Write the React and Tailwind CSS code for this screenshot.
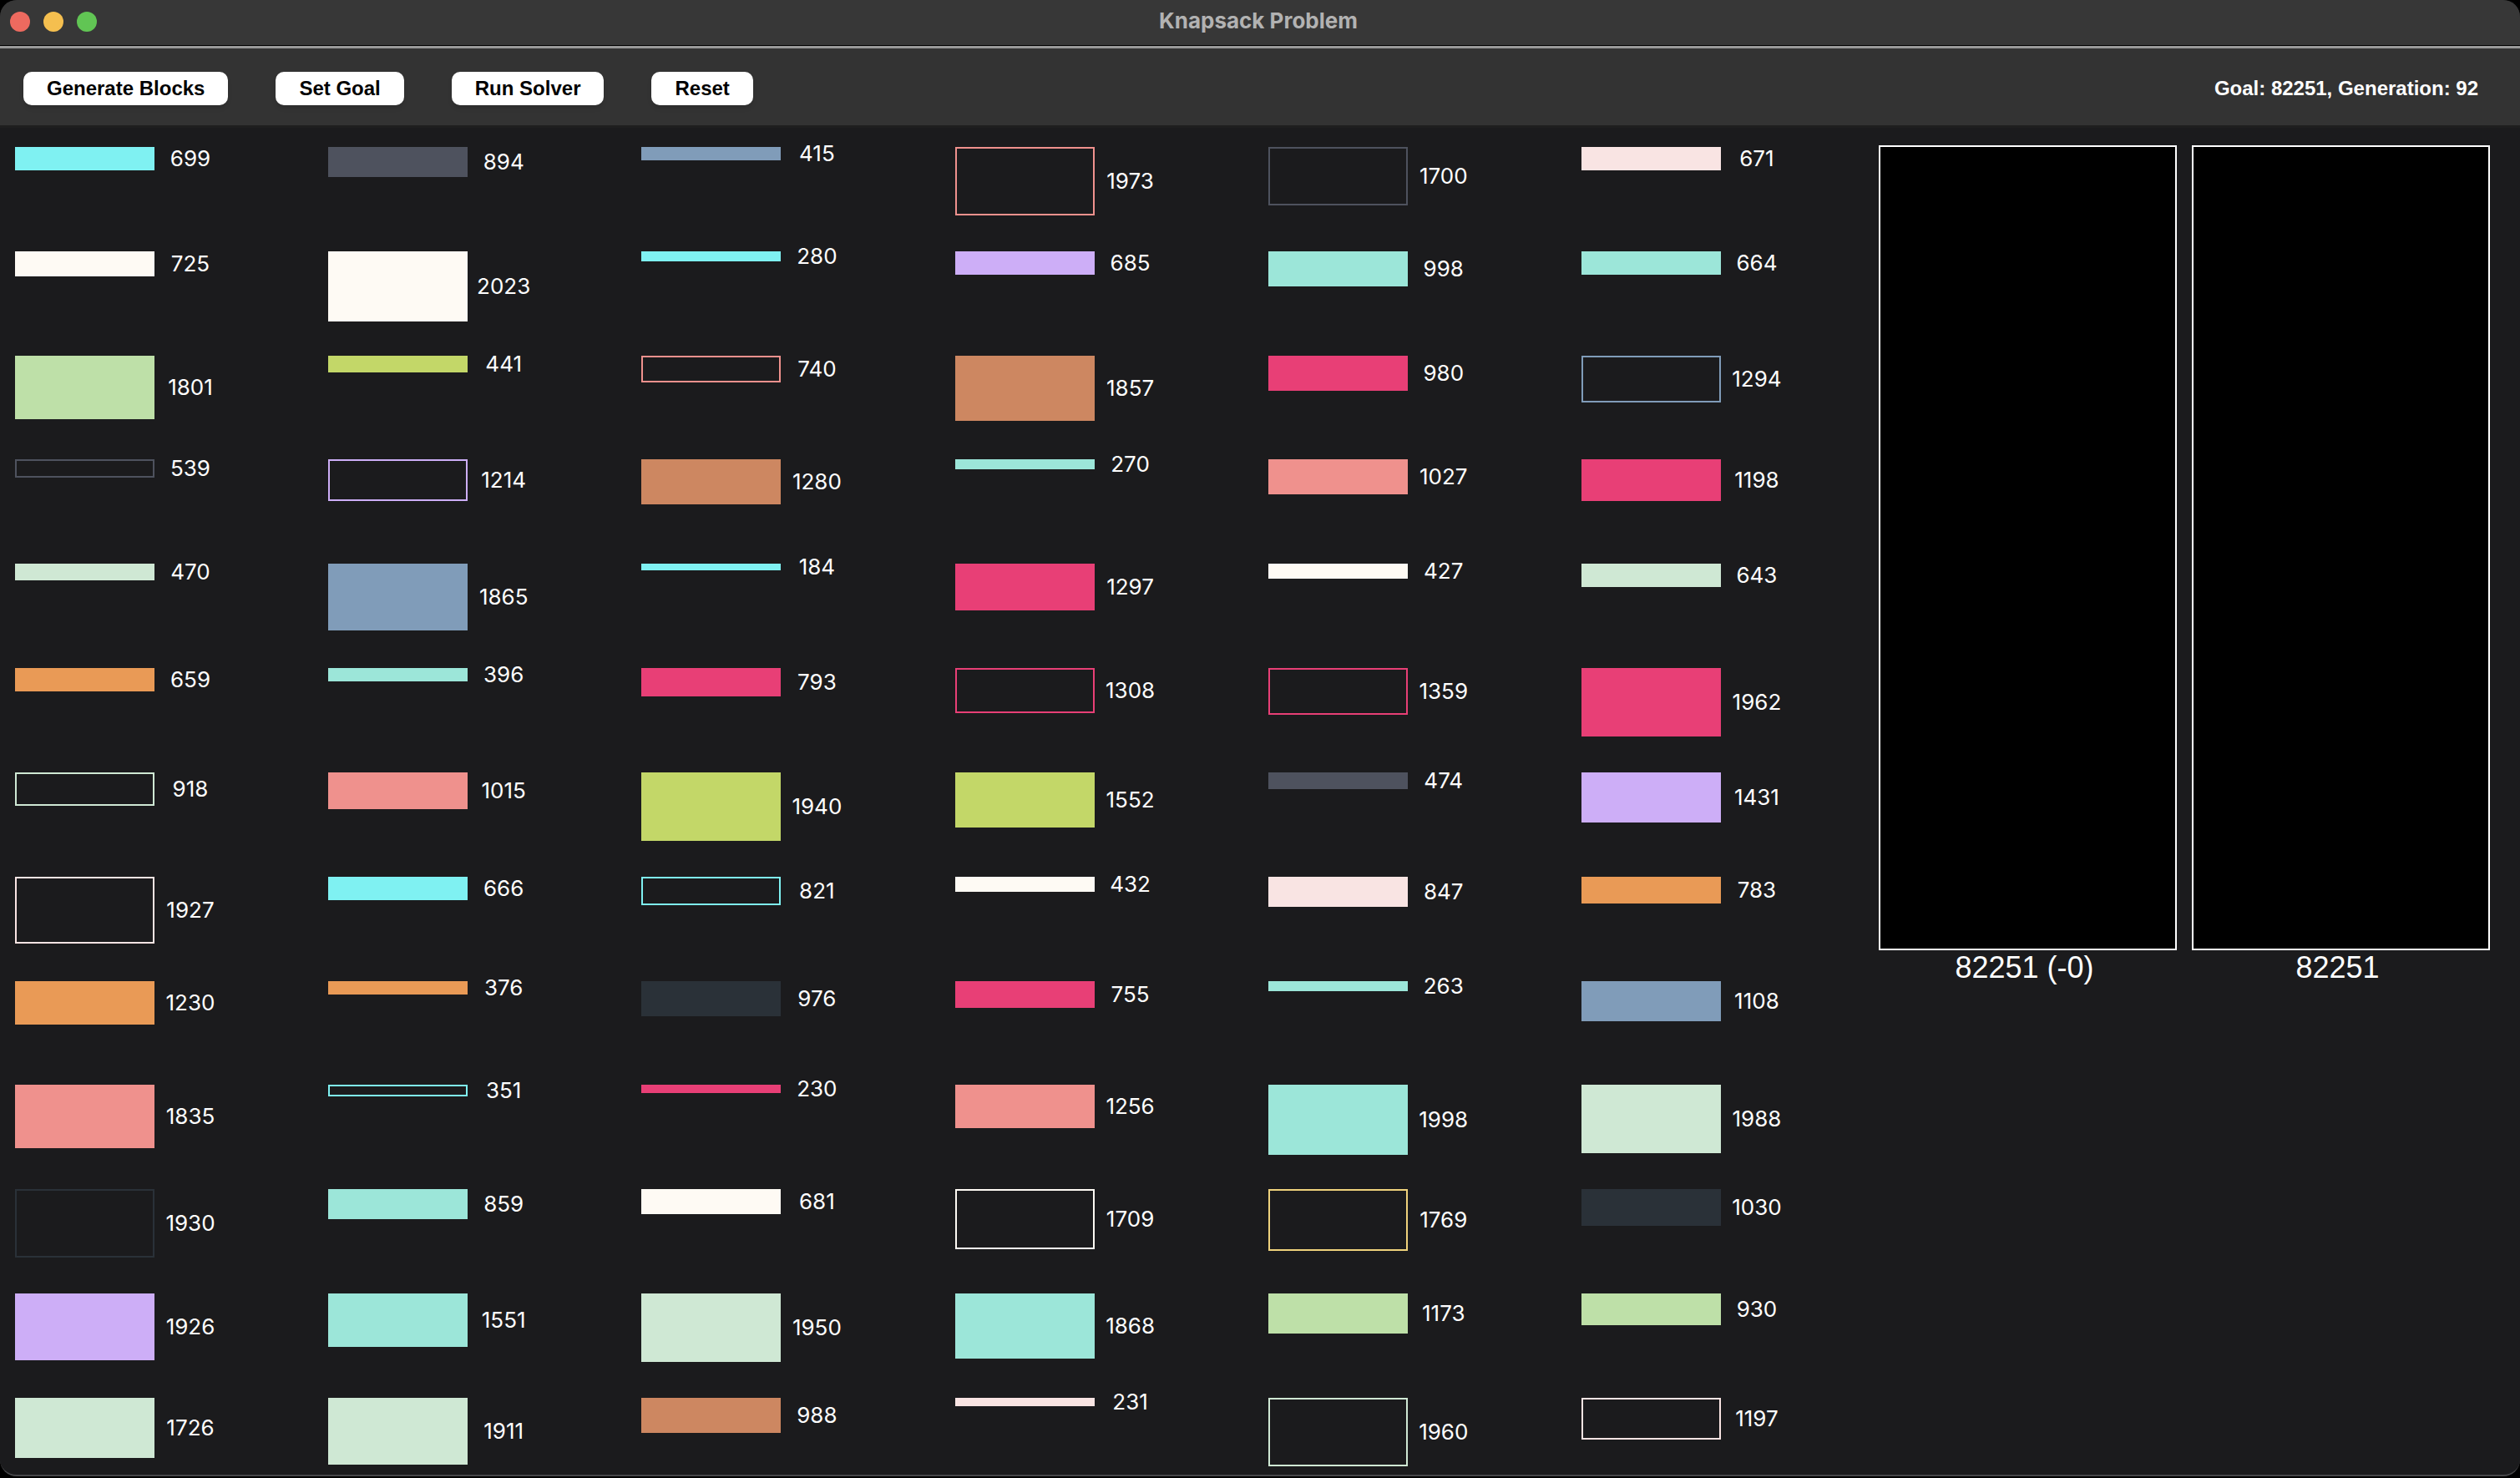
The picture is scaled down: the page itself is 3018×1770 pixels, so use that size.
const FILL = {
  aqua: "bg-[#7ff1f2] border-[#7ff1f2]",
  slate: "bg-[#4e525e] border-[#4e525e]",
  steel: "bg-[#809cb9] border-[#809cb9]",
  coral: "bg-[#ef918d] border-[#ef918d]",
  blush: "bg-[#f9e4e3] border-[#f9e4e3]",
  ivory: "bg-[#fefaf4] border-[#fefaf4]",
  violet: "bg-[#cdaef7] border-[#cdaef7]",
  mint: "bg-[#9ce6d9] border-[#9ce6d9]",
  leaf: "bg-[#bee0a8] border-[#bee0a8]",
  lime: "bg-[#c3d768] border-[#c3d768]",
  copper: "bg-[#cd8761] border-[#cd8761]",
  pink: "bg-[#e83f76] border-[#e83f76]",
  pale: "bg-[#cfe8d4] border-[#cfe8d4]",
  orange: "bg-[#e99a56] border-[#e99a56]",
  ink: "bg-[#2a3138] border-[#2a3138]",
};

const OUTLINE = {
  aqua: "border-[#7ff1f2]",
  slate: "border-[#4e525e]",
  steel: "border-[#809cb9]",
  coral: "border-[#ef918d]",
  blush: "border-[#f9e4e3]",
  ivory: "border-[#fefaf4]",
  violet: "border-[#cdaef7]",
  pink: "border-[#e83f76]",
  pale: "border-[#cfe8d4]",
  gold: "border-[#efd27c]",
  ink: "border-[#2a3138]",
};

// [value, bar height, colour, outlined]
const BLOCKS = [
  [699, 28, "aqua"], [894, 36, "slate"], [415, 16, "steel"], [1973, 82, "coral", true], [1700, 70, "slate", true], [671, 28, "blush"],
  [725, 30, "ivory"], [2023, 84, "ivory"], [280, 12, "aqua"], [685, 28, "violet"], [998, 42, "mint"], [664, 28, "mint"],
  [1801, 76, "leaf"], [441, 20, "lime"], [740, 32, "coral", true], [1857, 78, "copper"], [980, 42, "pink"], [1294, 56, "steel", true],
  [539, 22, "slate", true], [1214, 50, "violet", true], [1280, 54, "copper"], [270, 12, "mint"], [1027, 42, "coral"], [1198, 50, "pink"],
  [470, 20, "pale"], [1865, 80, "steel"], [184, 8, "aqua"], [1297, 56, "pink"], [427, 18, "ivory"], [643, 28, "pale"],
  [659, 28, "orange"], [396, 16, "mint"], [793, 34, "pink"], [1308, 54, "pink", true], [1359, 56, "pink", true], [1962, 82, "pink"],
  [918, 40, "pale", true], [1015, 44, "coral"], [1940, 82, "lime"], [1552, 66, "lime"], [474, 20, "slate"], [1431, 60, "violet"],
  [1927, 80, "blush", true], [666, 28, "aqua"], [821, 34, "aqua", true], [432, 18, "ivory"], [847, 36, "blush"], [783, 32, "orange"],
  [1230, 52, "orange"], [376, 16, "orange"], [976, 42, "ink"], [755, 32, "pink"], [263, 12, "mint"], [1108, 48, "steel"],
  [1835, 76, "coral"], [351, 14, "aqua", true], [230, 10, "pink"], [1256, 52, "coral"], [1998, 84, "mint"], [1988, 82, "pale"],
  [1930, 82, "ink", true], [859, 36, "mint"], [681, 30, "ivory"], [1709, 72, "ivory", true], [1769, 74, "gold", true], [1030, 44, "ink"],
  [1926, 80, "violet"], [1551, 64, "mint"], [1950, 82, "pale"], [1868, 78, "mint"], [1173, 48, "leaf"], [930, 38, "leaf"],
  [1726, 72, "pale"], [1911, 80, "pale"], [988, 42, "copper"], [231, 10, "blush"], [1960, 82, "pale", true], [1197, 50, "blush", true],
];

function Block({ value, height, color, outlined }) {
  return (
    <li className="flex items-center self-start" style={{ height }}>
      <span className={`h-full w-[167px] shrink-0 border-2 ${outlined ? OUTLINE[color] : FILL[color]}`} />
      <span className="w-[86px] shrink-0 text-center text-[26px] leading-none text-white">{value}</span>
    </li>
  );
}

function ToolbarButton({ children }) {
  return (
    <button
      type="button"
      className="h-10 rounded-[10px] bg-white px-7 text-2xl font-bold leading-none text-black shadow-md"
    >
      {children}
    </button>
  );
}

function Knapsack({ label }) {
  return (
    <figure className="flex flex-1 flex-col">
      <div className="h-[964px] border-2 border-white bg-black" />
      <figcaption className="pr-2 text-center text-4xl leading-[42px] text-white">{label}</figcaption>
    </figure>
  );
}

export default function App() {
  return (
    <div className="flex min-h-screen flex-col bg-black pb-[2px] font-['Liberation_Sans',Arial,sans-serif]">
      <div className="flex flex-1 flex-col overflow-hidden rounded-[20px] border-b-2 border-[#47474a] bg-[#1b1b1d]">
        <header className="grid h-[55px] grid-cols-[1fr_auto_1fr] items-center border-b border-black bg-[#373737] px-3 pb-[2px]">
          <div className="flex gap-4">
            <button type="button" aria-label="Close" className="size-6 rounded-full bg-[#ed6a5f]" />
            <button type="button" aria-label="Minimize" className="size-6 rounded-full bg-[#f5bf4f]" />
            <button type="button" aria-label="Zoom" className="size-6 rounded-full bg-[#61c554]" />
          </div>
          <h1 className="pb-[2px] pr-1 font-['Inter',sans-serif] text-[26px] font-bold leading-8 text-[#b2b2b2]">Knapsack Problem</h1>
        </header>

        <div className="flex h-[98px] items-center justify-between border-b-3 border-t-3 border-b-[#1f1f1f] border-t-[#999999] bg-[#333333] pl-7 pr-[50px] pt-1">
          <div className="flex gap-[57px]">
            <ToolbarButton>Generate Blocks</ToolbarButton>
            <ToolbarButton>Set Goal</ToolbarButton>
            <ToolbarButton>Run Solver</ToolbarButton>
            <ToolbarButton>Reset</ToolbarButton>
          </div>
          <p className="text-2xl font-bold leading-none text-white">Goal: 82251, Generation: 92</p>
        </div>

        <main className="grid flex-1 grid-cols-[1fr_768px]">
          <ul className="grid grid-cols-[repeat(6,240px)] grid-rows-[repeat(13,84px)] content-between justify-between pb-2 pl-[18px] pr-[116px] pt-[23px] font-['Inter',sans-serif]">
            {BLOCKS.map(([value, height, color, outlined]) => (
              <Block key={value} value={value} height={height} color={color} outlined={outlined} />
            ))}
          </ul>
          <section className="flex items-start gap-[18px] pr-9 pt-[21px]">
            <Knapsack label="82251 (-0)" />
            <Knapsack label="82251" />
          </section>
        </main>
      </div>
    </div>
  );
}
